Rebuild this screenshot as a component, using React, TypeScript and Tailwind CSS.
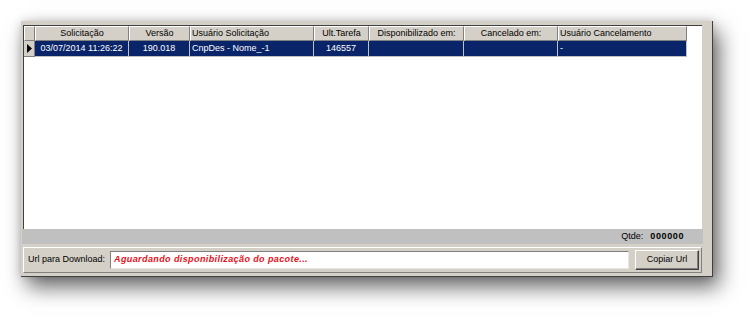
import React from 'react';

interface Column {
  title: string;
  width: string;
  align: 'center' | 'left';
}

const columns: Column[] = [
  { title: 'Solicitação', width: 'w-[94px]', align: 'center' },
  { title: 'Versão', width: 'w-[61px]', align: 'center' },
  { title: 'Usuário Solicitação', width: 'w-[124px]', align: 'left' },
  { title: 'Ult.Tarefa', width: 'w-[55px]', align: 'center' },
  { title: 'Disponibilizado em:', width: 'w-[95px]', align: 'center' },
  { title: 'Cancelado em:', width: 'w-[94px]', align: 'center' },
  { title: 'Usuário Cancelamento', width: 'w-[129px]', align: 'left' },
];

const row = ['03/07/2014 11:26:22', '190.018', 'CnpDes - Nome_-1', '146557', '', '', '-'];

const App: React.FC = () => {
  return (
    <div
      className="w-[755px] h-[321px] bg-white pt-[21px] pl-[21px] text-[9px] text-black"
      style={{ fontFamily: '"Liberation Sans", Arial, sans-serif' }}
    >
      <div className="w-[692px] h-[256px] bg-[#d4d0c8] border-r border-b border-[#404040] shadow-[6px_10px_20px_rgba(0,0,0,0.6),0_0_8px_rgba(0,0,0,0.15)] flex flex-col pt-[4px] pl-[2px] pr-[10px]">
        {/* Grid */}
        <div className="h-[204px] bg-white border-t border-l border-[#404040] flex flex-col">
          <div className="flex h-[15px]">
            <div className="w-[11px] bg-[#d4d0c8] border-t border-l border-white border-r border-b border-r-[#808080] border-b-[#808080]" />
            {columns.map((c) => (
              <div
                key={c.title}
                className={`${c.width} bg-[#d4d0c8] border-t border-l border-white border-r border-b border-r-[#808080] border-b-[#808080] leading-[13px] whitespace-nowrap overflow-hidden ${
                  c.align === 'center' ? 'text-center' : 'text-left pl-[1px]'
                }`}
              >
                {c.title}
              </div>
            ))}
          </div>
          <div className="flex h-[16px]">
            <div className="w-[11px] bg-[#d4d0c8] border-r border-b border-[#808080] flex items-center justify-center">
              <svg width="5" height="9" viewBox="0 0 5 9">
                <path d="M0 0 L5 4.5 L0 9 Z" fill="#000" />
              </svg>
            </div>
            {columns.map((c, i) => (
              <div
                key={c.title}
                className={`${c.width} bg-[#0a246a] text-white border-r border-b border-[#c0c0c0] leading-[15px] whitespace-nowrap overflow-hidden ${
                  c.align === 'center' ? 'text-center' : 'text-left pl-[2px]'
                }`}
              >
                {row[i]}
              </div>
            ))}
          </div>
        </div>

        {/* Status bar */}
        <div className="h-[15px] bg-[#c0c0c0] -ml-[1px] -mr-[1px] flex items-center justify-end pr-[19px] gap-[7px] leading-none">
          <span>Qtde:</span>
          <span className="font-bold tracking-[0.6px]">000000</span>
        </div>

        <div className="h-[3px]" />

        {/* Download panel */}
        <div className="h-[26px] border-t border-l border-white border-r border-b border-r-[#808080] border-b-[#808080] flex items-center pl-[4px] pr-[2px]">
          <span className="w-[82px] whitespace-nowrap">Url para Download:</span>
          <div className="w-[519px] h-[18px] bg-white border-t border-l border-[#808080] border-r border-b border-r-[#e8e6e0] border-b-[#e8e6e0] flex items-center pl-[3px]">
            <span className="text-[#e8101a] font-bold italic text-[9px] tracking-[0.4px] whitespace-nowrap">
              Aguardando disponibilização do pacote...
            </span>
          </div>
          <div className="ml-auto w-[64px] h-[20px] bg-[#d4d0c8] border-t border-l border-white border-r border-b border-r-[#404040] border-b-[#404040] shadow-[inset_-1px_-1px_0_#808080] flex items-center justify-center">
            Copiar Url
          </div>
        </div>
      </div>
    </div>
  );
};

export default App;
